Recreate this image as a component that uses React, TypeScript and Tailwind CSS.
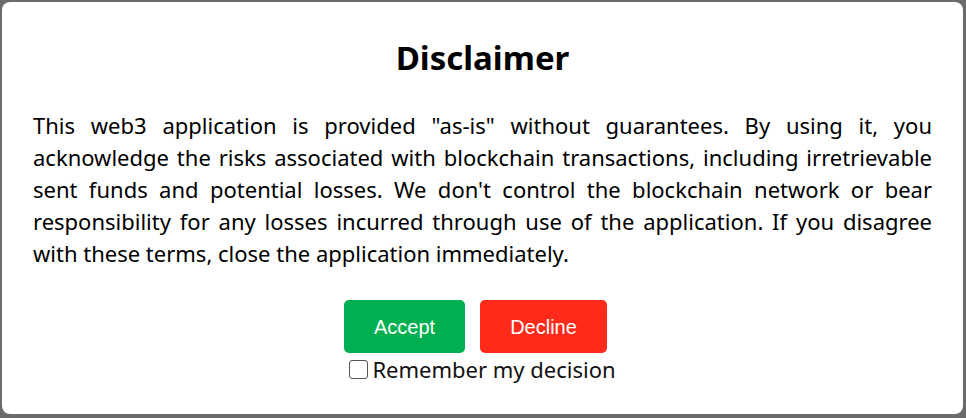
import React from "react";

export default function App() {
  return (
    <div className="w-[966px] h-[418px] bg-[#6b6b6b] pt-[2px] pl-[2px] pr-[3px] pb-[4px]">
      <div
        className="h-full bg-white rounded-[8px] px-[31px] pt-[34px] flex flex-col items-center text-black"
        style={{ fontFamily: '"Segoe UI", "Noto Sans", "Open Sans", sans-serif' }}
      >
        <h1 className="text-[33px] leading-[44px] font-bold">Disclaimer</h1>
        <p className="mt-[29px] text-[22px] leading-[32px] text-justify w-full">
          This web3 application is provided "as-is" without guarantees. By using it, you acknowledge the risks associated with blockchain transactions, including irretrievable sent funds and potential losses. We don't control the blockchain network or bear responsibility for any losses incurred through use of the application. If you disagree with these terms, close the application immediately.
        </p>
        <div className="mt-[31px] mr-[14px] flex gap-[15px]">
          <button
            className="w-[121px] h-[53px] rounded-[5px] bg-[#00b050] text-white text-[20px]"
            style={{ fontFamily: '"Liberation Sans", Arial, sans-serif' }}
          >
            Accept
          </button>
          <button
            className="w-[127px] h-[53px] rounded-[5px] bg-[#ff2a1a] text-white text-[20px]"
            style={{ fontFamily: '"Liberation Sans", Arial, sans-serif' }}
          >
            Decline
          </button>
        </div>
        <label className="flex items-center text-[22px] leading-[32px] text-[#111]">
          <input type="checkbox" className="w-[19px] h-[19px] mr-[4px] appearance-none border border-[#555] rounded-[3px] bg-white" />
          Remember my decision
        </label>
      </div>
    </div>
  );
}
